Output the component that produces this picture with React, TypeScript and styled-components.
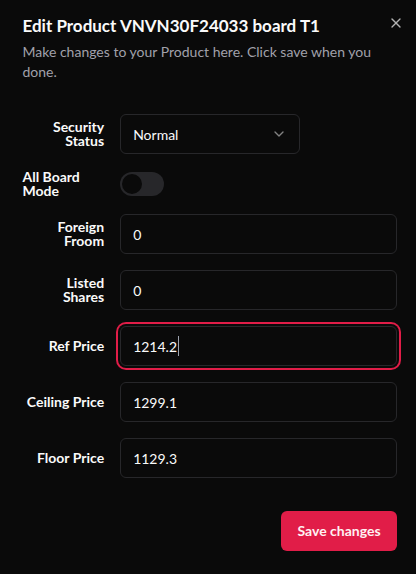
import React from "react";
import styled, { createGlobalStyle } from "styled-components";
import { X, ChevronDown } from "lucide-react";

const GlobalStyle = createGlobalStyle`
  html, body {
    margin: 0;
    padding: 0;
    background: #0a0a0a;
    overflow: hidden;
  }
  * {
    box-sizing: border-box;
  }
  body {
    font-family: Lato, "Noto Sans", sans-serif;
    color: #fafafa;
  }
`;

const Dialog = styled.div`
  position: relative;
  width: 416px;
  height: 574px;
  background: #0a0a0a;
  padding: 14px 19px 0 22.5px;
  display: flex;
  flex-direction: column;
  gap: 16px;
`;

const CloseButton = styled.button`
  all: unset;
  position: absolute;
  top: 15px;
  right: 12px;
  width: 16px;
  height: 16px;
  color: #fafafa;
  opacity: 0.7;
  display: flex;
  cursor: pointer;
`;

const Header = styled.div`
  display: flex;
  flex-direction: column;
  gap: 4px;
`;

const Title = styled.h2`
  margin: 0;
  font-size: 17px;
  font-weight: 700;
  line-height: 24px;
`;

const Description = styled.p`
  margin: 0;
  font-size: 14px;
  line-height: 20px;
  color: #a1a1aa;
`;

const Form = styled.div`
  display: grid;
  grid-template-columns: repeat(4, 1fr);
  column-gap: 16px;
  row-gap: 16px;
  align-items: center;
  padding: 16px 0 17px;
`;

const Label = styled.label<{ $left?: boolean }>`
  font-size: 14px;
  font-weight: 700;
  line-height: 14px;
  text-align: ${(p) => (p.$left ? "left" : "right")};
`;

const Input = styled.input`
  grid-column: span 3;
  height: 40px;
  width: 100%;
  border: 1px solid #27272a;
  border-radius: 6px;
  background: #0a0a0a;
  padding: 0 12px;
  font-family: inherit;
  font-size: 14px;
  color: #fafafa;
  outline: none;
`;

const FocusedField = styled.div`
  grid-column: span 3;
  height: 40px;
  display: flex;
  align-items: center;
  border: 1px solid #27272a;
  border-radius: 6px;
  background: #0a0a0a;
  padding: 0 12px;
  font-size: 14px;
  box-shadow: 0 0 0 2px #0a0a0a, 0 0 0 4px #e11d48;
`;

const Caret = styled.span`
  display: inline-block;
  width: 1px;
  height: 20px;
  margin-left: 1px;
  background: #9ca3af;
`;

const SelectTrigger = styled.button`
  all: unset;
  grid-column: span 3;
  width: 180px;
  height: 40px;
  box-sizing: border-box;
  border: 1px solid #27272a;
  border-radius: 6px;
  padding: 0 12px;
  display: flex;
  align-items: center;
  justify-content: space-between;
  font-size: 14px;
  color: #fafafa;
  svg {
    opacity: 0.5;
  }
`;

const SwitchTrack = styled.button<{ $on: boolean }>`
  all: unset;
  grid-column: span 3;
  width: 44px;
  height: 24px;
  box-sizing: border-box;
  border: 2px solid transparent;
  border-radius: 999px;
  background: ${(p) => (p.$on ? "#e11d48" : "#27272a")};
  display: flex;
  align-items: center;
  cursor: pointer;
`;

const SwitchThumb = styled.span<{ $on: boolean }>`
  width: 20px;
  height: 20px;
  border-radius: 50%;
  background: #0a0a0a;
  transform: translateX(${(p) => (p.$on ? "20px" : "0")});
`;

const Footer = styled.div`
  display: flex;
  justify-content: flex-end;
`;

const SaveButton = styled.button`
  all: unset;
  height: 40px;
  width: 116px;
  box-sizing: border-box;
  text-align: center;
  white-space: nowrap;
  border-radius: 6px;
  background: #e11d48;
  color: #fff1f2;
  font-size: 14px;
  font-weight: 700;
  line-height: 40px;
  cursor: pointer;
`;

const fields = [
  { label: "Foreign Froom", value: "0" },
  { label: "Listed Shares", value: "0" },
  { label: "Ref Price", value: "1214.2", focused: true },
  { label: "Ceiling Price", value: "1299.1" },
  { label: "Floor Price", value: "1129.3" },
];

export default function App() {
  const [allBoard, setAllBoard] = React.useState(false);

  return (
    <>
      <GlobalStyle />
      <Dialog>
        <CloseButton aria-label="Close">
          <X size={16} />
        </CloseButton>
        <Header>
          <Title>Edit Product VNVN30F24033 board T1</Title>
          <Description>
            Make changes to your Product here. Click save when you done.
          </Description>
        </Header>
        <Form>
          <Label>Security Status</Label>
          <SelectTrigger>
            <span>Normal</span>
            <ChevronDown size={16} />
          </SelectTrigger>

          <Label $left>All Board Mode</Label>
          <SwitchTrack $on={allBoard} onClick={() => setAllBoard(!allBoard)}>
            <SwitchThumb $on={allBoard} />
          </SwitchTrack>

          {fields.map((f) => (
            <React.Fragment key={f.label}>
              <Label>{f.label}</Label>
              {f.focused ? (
                <FocusedField>
                  <span>{f.value}</span>
                  <Caret />
                </FocusedField>
              ) : (
                <Input defaultValue={f.value} />
              )}
            </React.Fragment>
          ))}
        </Form>
        <Footer>
          <SaveButton>Save changes</SaveButton>
        </Footer>
      </Dialog>
    </>
  );
}
